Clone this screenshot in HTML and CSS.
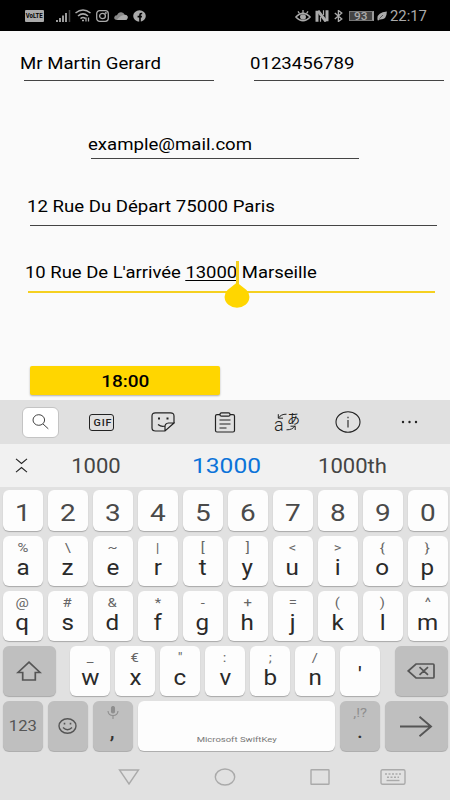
FILE: index.html
```html
<!DOCTYPE html>
<html lang="fr">
	<head>
		<meta charset="utf-8">
		<title>Commande</title>
		<link rel="stylesheet" href="styles.css">
	</head>
	<body>
		<header class="status">
			<span class="volte"><span class="t">VoLTE</span></span>
			<svg class="signal" width="15" height="12" viewBox="0 0 15 12"><path d="M1 10v2M4 8v4M7 5.500v6.500M10 3v9" stroke="#aaa" stroke-width="1.800"/><path d="M13.500 0v12" stroke="#444" stroke-width="1.500"/></svg>
			<svg class="wifi" width="16" height="13" viewBox="0 0 16 13" fill="none" stroke="#aaa" stroke-width="1.500"><path d="M.5 4Q8-2 15.500 4M3 7Q8 2.700 13 7M5.500 9.600Q8 7.500 10.500 9.600"/><path d="M7 11.500h2M11 8.500v4M13.500 8.500v4" stroke-width="1.300"/></svg>
			<svg class="insta" width="13" height="12" viewBox="0 0 13 12" fill="none" stroke="#aaa" stroke-width="1.300"><rect x=".7" y=".7" width="11.600" height="10.600" rx="3"/><ellipse cx="6.500" cy="6" rx="2.900" ry="2.600"/><circle cx="9.800" cy="3" r=".4"/></svg>
			<svg class="cloud" width="14" height="8" viewBox="0 0 14 8"><path d="M3 8Q0 7.800 .2 5.500 .6 3.200 3 3.300 4.300 0 7.300 .2 9.800.5 10.600 2.800 13.500 3 13.700 5.500 13.500 8 11 8z" fill="#888"/><path d="M3 8Q5 4 10.600 2.800 13.500 3 13.700 5.500 13.500 8 11 8z" fill="#aaa"/></svg>
			<svg class="fb" width="13" height="12" viewBox="0 0 13 12"><ellipse cx="6.500" cy="6" rx="6.300" ry="5.700" fill="#aaa"/><path d="M7 12V5Q7 3.300 9.200 3.500M4.600 6.600h4.300" fill="none" stroke="#000" stroke-width="1.600"/></svg>
			<svg class="eye" width="16" height="12" viewBox="0 0 16 12" fill="none" stroke="#aaa" stroke-width="1.300"><path d="M.8 7Q8-.5 15.200 7 8 14.500 .8 7z"/><ellipse cx="8" cy="7" rx="2.300" ry="2" fill="#aaa"/><path d="M8 0v3M3 1.300l1.500 2.200M13 1.300l-1.500 2.200"/></svg>
			<svg class="nfc" width="14" height="12" viewBox="0 0 14 12" fill="none" stroke="#aaa"><path d="M2 11.800V.8M12 .2v11" stroke-width="3"/><path d="M3 .8L11 11.500" stroke-width="3"/><path d="M5.500 11.800V7M8.500 .2V5" stroke-width="1.200"/></svg>
			<svg class="bt" width="9" height="12" viewBox="0 0 9 12" fill="none" stroke="#aaa" stroke-width="1.300"><path d="M.8 3l7 6L4.400 11.500V.5L7.800 3l-7 6"/></svg>
			<span class="battery"><span class="t">93</span></span>
			<svg class="leaf" width="10" height="10" viewBox="0 0 10 10"><path d="M.5 8.500Q-.5 1.500 9.800.5 10 9 2.500 8.500L1 9.800z" fill="#aaa"/><path d="M2.500 7.500L6 4" stroke="#000" stroke-width=".5"/></svg>
			<span class="clock"><span class="t">22:17</span></span>
		</header>
		<main class="form">
			<div class="field name"><span class="t">Mr Martin Gerard</span></div>
			<div class="field phone"><span class="t">0123456789</span></div>
			<div class="field email"><span class="t">example@mail.com</span></div>
			<div class="field from"><span class="t">12 Rue Du Départ 75000 Paris</span></div>
			<div class="field to">
				<span class="t">10 Rue De L'arrivée <u>13000</u> Marseille</span>
				<span class="caret"></span>
				<svg class="handle" width="26" height="26" viewBox="0 0 26 26"><path d="M13 .5L22.500 8A12.400 10.800 0 1 1 3.500 8z" fill="#ffd600"/></svg>
			</div>
			<button class="time"><span class="t">18:00</span></button>
		</main>
		<section class="keyboard">
			<div class="tools">
				<span class="search"><svg width="17" height="16" viewBox="0 0 17 16" fill="none" stroke="#444"><ellipse cx="6.800" cy="6" rx="5.800" ry="5.300"/><path d="M11 10l5.300 4.800"/></svg></span>
				<span class="gif"><span class="t">GIF</span></span>
				<svg class="sticker" width="24" height="20" viewBox="0 0 24 20" fill="none" stroke="#222" stroke-width="1.200"><path d="M23 11V4Q23 .8 19.500.8H4.500Q1 .8 1 4v12q0 3 3.500 3H14L23 11h-5.500Q14 11.500 14 14.500V19M7 12.500q3.500 2.800 7 1.500"/><path d="M7 6.500h2M15.500 6.500h2" stroke-width="1.800"/></svg>
				<svg class="clip" width="22" height="21" viewBox="0 0 22 21" fill="none" stroke="#222" stroke-width="1.200"><path d="M6 2.700H3Q1.500 2.700 1.500 4v14.500Q1.500 20 3 20h16q1.500 0 1.500-1.500V4Q20.500 2.700 19 2.700h-3"/><rect x="6" y=".8" width="10" height="3.400" rx="1.500"/><path d="M5.500 8h11M5.500 12h11M5.500 16h7"/></svg>
				<span class="translate">
					<span class="a">a</span><b>あ</b>
					<svg width="26" height="20" viewBox="0 0 26 20" fill="none" stroke="#222"><path d="M12.500 2.200Q7 2 4.500 6M4.300 2.200V6.200H9M12.500 17.800q6 .2 8.500-4M16.500 14.200h4.700v3.800"/></svg>
				</span>
				<svg class="info" width="26" height="22" viewBox="0 0 26 22" fill="none" stroke="#222" stroke-width="1.100"><ellipse cx="13" cy="11" rx="12" ry="10.200"/><path d="M13 9v7.500M13 5.800v1.500"/></svg>
				<svg class="dots" width="17" height="4" viewBox="0 0 17 4" fill="#222"><circle cx="2" cy="2" r="1.200"/><circle cx="8.500" cy="2" r="1.200"/><circle cx="15" cy="2" r="1.200"/></svg>
			</div>
			<div class="suggestions">
				<svg width="13" height="15" viewBox="0 0 13 15" fill="none" stroke="#222" stroke-width="1.100"><path d="M1 .8l5.500 4.700L12 .8M1 14.200l5.500-4.700L12 14.200"/></svg>
				<span class="word"><span class="t">1000</span></span>
				<span class="word best"><span class="t">13000</span></span>
				<span class="word last"><span class="t">1000th</span></span>
			</div>
			<div class="row digits">
				<div class="key"><b>1</b></div>
				<div class="key"><b>2</b></div>
				<div class="key"><b>3</b></div>
				<div class="key"><b>4</b></div>
				<div class="key"><b>5</b></div>
				<div class="key"><b>6</b></div>
				<div class="key"><b>7</b></div>
				<div class="key"><b>8</b></div>
				<div class="key"><b>9</b></div>
				<div class="key"><b>0</b></div>
			</div>
			<div class="row">
				<div class="key"><small>%</small><b>a</b></div>
				<div class="key"><small>\</small><b>z</b></div>
				<div class="key"><small>~</small><b>e</b></div>
				<div class="key"><small>|</small><b>r</b></div>
				<div class="key"><small>[</small><b>t</b></div>
				<div class="key"><small>]</small><b>y</b></div>
				<div class="key"><small>&lt;</small><b>u</b></div>
				<div class="key"><small>&gt;</small><b>i</b></div>
				<div class="key"><small>{</small><b>o</b></div>
				<div class="key"><small>}</small><b>p</b></div>
			</div>
			<div class="row">
				<div class="key"><small>@</small><b>q</b></div>
				<div class="key"><small>#</small><b>s</b></div>
				<div class="key"><small>&amp;</small><b>d</b></div>
				<div class="key"><small>*</small><b>f</b></div>
				<div class="key"><small>-</small><b>g</b></div>
				<div class="key"><small>+</small><b>h</b></div>
				<div class="key"><small>=</small><b>j</b></div>
				<div class="key"><small>(</small><b>k</b></div>
				<div class="key"><small>)</small><b>l</b></div>
				<div class="key"><small>^</small><b>m</b></div>
			</div>
			<div class="row">
				<div class="key dark shift"><svg width="26" height="20" viewBox="0 0 26 20" fill="none" stroke="#555" stroke-width="1.700"><path d="M13 1.200L24 11.500H19.300V19H6.700V11.500H2z"/></svg></div>
				<div class="key"><small>_</small><b>w</b></div>
				<div class="key"><small>€</small><b>x</b></div>
				<div class="key"><small>"</small><b>c</b></div>
				<div class="key"><small>:</small><b>v</b></div>
				<div class="key"><small>;</small><b>b</b></div>
				<div class="key"><small>/</small><b>n</b></div>
				<div class="key quote"><b>'</b></div>
				<div class="key dark back"><svg width="28" height="16" viewBox="0 0 28 16" fill="none" stroke="#555" stroke-width="1.700"><path d="M1.200 8L9 1H26q1 0 1 1v12q0 1-1 1H9zM12.500 4.200l8.500 7.600M21 4.200l-8.500 7.600"/></svg></div>
			</div>
			<div class="row">
				<div class="key dark num"><span class="t">123</span></div>
				<div class="key dark"><svg width="19" height="16" viewBox="0 0 19 16" fill="none" stroke="#555" stroke-width="1.400"><ellipse cx="9.500" cy="8" rx="8.500" ry="7.200"/><path d="M5 9.500q4.500 4.500 9 0"/><path d="M5.700 5.700h1.600M11.700 5.700h1.600" stroke-width="1.700"/></svg></div>
				<div class="key dark mic"><svg width="12" height="13" viewBox="0 0 12 13" fill="none" stroke="#8f8f8f" stroke-width="1.100"><path d="M1 5q.3 4.500 5 4.500T11 5M6 9.500V13"/><rect x="4.500" y=".5" width="3" height="6.500" rx="1.500" fill="#8f8f8f"/></svg><b>,</b></div>
				<div class="key space"><span class="t">Microsoft SwiftKey</span></div>
				<div class="key dark dot"><small>,!?</small><b>.</b></div>
				<div class="key dark enter"><svg width="34" height="21" viewBox="0 0 34 21" fill="none" stroke="#555" stroke-width="1.900"><path d="M1 10.500h31M20.500 .8L32 10.500 20.500 20.200"/></svg></div>
			</div>
		</section>
		<nav class="nav">
			<svg width="22" height="16" viewBox="0 0 22 16"><path d="M1.500 1h19L11 15z"/></svg>
			<svg width="22" height="18" viewBox="0 0 22 18"><ellipse cx="11" cy="9" rx="9.700" ry="8"/></svg>
			<svg width="20" height="16" viewBox="0 0 20 16"><rect x="1" y=".7" width="18" height="14.600" rx=".5"/></svg>
			<svg width="26" height="16" viewBox="0 0 26 16"><rect x="1" y=".8" width="24" height="14.400" rx="1.500"/><path d="M5 5h16M7 8.200h12" stroke-dasharray="2 1.500"/><path d="M6.500 11.500h13"/></svg>
		</nav>
	</body>
</html>
```
FILE: styles.css
```css
body {
	background: #fafafa;
	color: #000;
	display: flex;
	flex-direction: column;
	font-family: Roboto, sans-serif;
	font-size: 16px;
	height: 800px;
	margin: 0;
	overflow: hidden;
	width: 450px;
}
svg {
	display: block;
	flex: none;
}
.t, .key b, .key small {
	display: inline-block;
	transform: scaleX(1.1875);
	white-space: nowrap;
}
.status {
	align-items: center;
	background: #000;
	box-sizing: border-box;
	color: #aaa;
	display: flex;
	flex: none;
	height: 31px;
	padding-left: 25px;
}
.volte {
	background: #aaa;
	border-radius: 1px;
	color: #000;
	font-size: 8px;
	font-weight: 700;
	height: 12px;
	line-height: 12px;
	text-align: center;
	width: 19px;
}
.volte .t {
	margin: 0 -5px;
	transform: scaleX(.75);
}
.signal {
	margin-left: 12px;
}
.wifi {
	margin-left: 4px;
}
.insta {
	margin-left: 5px;
}
.cloud {
	margin-left: 5px;
}
.fb {
	margin-left: 5px;
}
.eye {
	margin-left: 149px;
}
.nfc {
	margin-left: 4px;
}
.bt {
	margin-left: 5px;
}
.battery {
	border: 1px solid #777;
	border-right: 2px solid #999;
	box-sizing: border-box;
	background: #444;
	font-size: 10px;
	font-weight: 500;
	height: 10px;
	line-height: 9px;
	margin-left: 6px;
	text-align: center;
	width: 25px;
}
.leaf {
	margin-left: 3px;
}
.clock {
	font-size: 14px;
	margin-left: 3px;
}
.clock .t {
	transform: scaleX(1.06);
	transform-origin: 0 50%;
}
.form {
	align-content: start;
	display: grid;
	flex: none;
	grid-template-columns: 230px 220px;
	height: 369px;
}
.field {
	border-bottom: 1px solid #444;
	box-sizing: border-box;
	line-height: 22px;
}
.field .t {
	margin-left: -3px;
	transform: scaleX(1.162);
	transform-origin: 0 50%;
}
.name, .phone {
	height: 28px;
	margin: 22px 0 0 24px;
	width: 190px;
}
.name .t, .phone .t {
	margin-left: -4px;
}
.email, .from, .to, .time {
	grid-column: 1 / 3;
}
.email {
	height: 25px;
	margin: 53px 0 0 91px;
	width: 268px;
}
.from {
	height: 30px;
	margin: 37px 0 0 30px;
	width: 407px;
}
.to {
	border-bottom: 2px solid #f5d020;
	height: 31px;
	margin: 36px 0 0 28px;
	position: relative;
	width: 407px;
}
.to .t {
	transform: scaleX(1.153);
}
.field u {
	border-bottom: 1px solid #000;
	display: inline-block;
	line-height: 15px;
	text-decoration: none;
}
.caret {
	background: #f5d020;
	height: 24px;
	left: 208px;
	position: absolute;
	top: -1px;
	width: 3px;
}
.handle {
	left: 196px;
	position: absolute;
	top: 20px;
}
.time {
	background: #ffd600;
	border: 0;
	border-radius: 2px;
	box-shadow: 0 1px 2px rgba(0, 0, 0, .3);
	font: 500 16px Roboto, sans-serif;
	height: 29px;
	margin: 73px 0 0 30px;
	padding: 2px 0 0;
	width: 190px;
}
.keyboard {
	background: #e1e1e1;
	flex: none;
	height: 352px;
}
.tools {
	align-items: center;
	background: #e0e0e0;
	display: flex;
	height: 44px;
	padding-left: 22px;
}
.search {
	align-items: center;
	background: #fff;
	border: 1px solid #c4c4c4;
	border-radius: 6px;
	box-sizing: border-box;
	display: flex;
	height: 31px;
	justify-content: center;
	width: 37px;
}
.gif {
	border: 1px solid #222;
	border-radius: 3px;
	box-sizing: border-box;
	color: #222;
	font-size: 9px;
	font-weight: 500;
	height: 17px;
	letter-spacing: .7px;
	line-height: 16px;
	margin-left: 30px;
	text-align: center;
	text-indent: 1px;
	width: 25px;
}
.sticker {
	margin-left: 37px;
}
.clip {
	margin-left: 39px;
}
.translate {
	color: #222;
	height: 20px;
	margin-left: 38px;
	position: relative;
	width: 26px;
}
.translate .a {
	font-size: 18px;
	font-weight: 300;
	left: 0;
	line-height: 20px;
	position: absolute;
	top: 3px;
}
.translate b {
	font: 13px/13px "Noto Sans CJK JP", sans-serif;
	position: absolute;
	right: 0;
	top: -1px;
}
.translate svg {
	position: absolute;
	top: 0;
}
.info {
	margin-left: 35px;
}
.dots {
	margin-left: 40px;
}
.suggestions {
	align-items: center;
	background: #f1f1f1;
	box-sizing: border-box;
	display: flex;
	height: 43px;
	margin-bottom: 2.5px;
	padding-left: 15px;
}
.word {
	color: #444;
	font-size: 19.5px;
	padding-top: 1px;
	text-align: center;
	width: 125px;
}
.word .t {
	transform: scaleX(1.13);
}
.word:nth-child(2) {
	margin-left: 5px;
}
.best {
	color: #0b73d9;
	font-size: 21px;
	margin: 0 3px;
	width: 131px;
}
.best .t {
	transform: scaleX(1.17);
}
.last {
	width: 114px;
}
.row {
	display: flex;
	gap: 5px;
	height: 50px;
	margin: 0 2.5px 5px;
}
.key {
	align-items: center;
	background: #fdfdfd;
	border-radius: 6px;
	box-shadow: 0 1px 1px rgba(0, 0, 0, .25);
	color: #2a2a2a;
	display: flex;
	flex: none;
	flex-direction: column;
	width: 40px;
}
.key small {
	color: #666;
	font-size: 13.5px;
	height: 18px;
	line-height: 18px;
	padding-top: 2px;
	transform: scaleX(1.1);
}
.key b {
	font-size: 22px;
	font-weight: 400;
	line-height: 24px;
	transform: scaleX(1.1);
}
.digits {
	height: 41.5px;
}
.digits .key b {
	color: #4a4a4a;
	font-size: 24.5px;
	line-height: 45px;
	transform: scaleX(1.14);
}
.key.dark {
	background: #bfbfbf;
	color: #555;
	justify-content: center;
}
.key.dot {
	justify-content: flex-start;
}
.dot small {
	color: #8f8f8f;
}
.dot b, .mic b {
	color: #333;
}
.dot b {
	line-height: 20px;
}
.shift {
	margin-right: 9.5px;
	width: 53px;
}
.back {
	margin-left: 9.5px;
	width: 53px;
}
.quote b {
	line-height: 58px;
}
.num {
	font-size: 14px;
}
.key.mic {
	justify-content: flex-start;
}
.mic svg {
	margin-top: 5px;
}
.key.space {
	color: #777;
	font-size: 8px;
	justify-content: flex-end;
	width: 197.5px;
}
.space .t {
	padding-bottom: 7px;
}
.enter {
	width: 62.5px;
}
.nav {
	align-items: center;
	background: #e1e1e1;
	display: flex;
	flex: 1;
	padding: 2px 0 0 118px;
}
.nav svg {
	fill: none;
	stroke: #aaa;
	stroke-width: 1.4;
}
.nav svg:nth-child(2) {
	margin-left: 74px;
}
.nav svg:nth-child(3) {
	margin-left: 74px;
}
.nav svg:nth-child(4) {
	margin-left: 50px;
}
```
